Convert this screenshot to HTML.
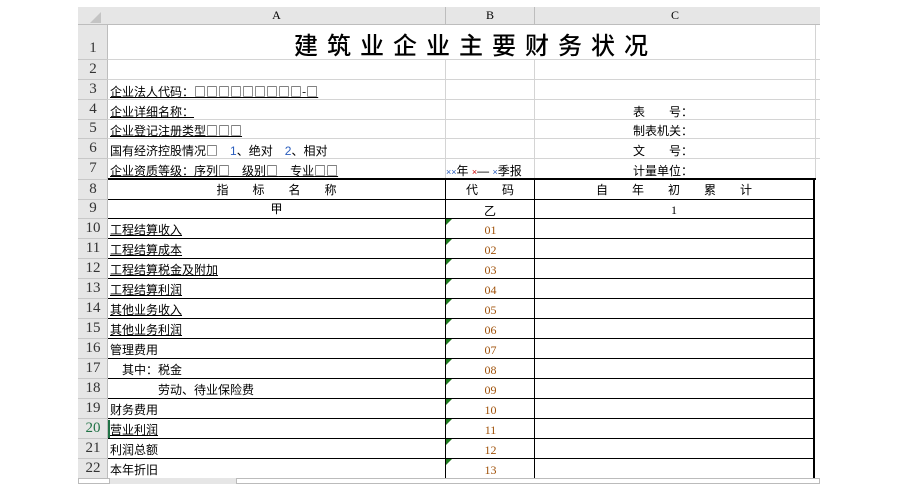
<!DOCTYPE html>
<html><head><meta charset="utf-8"><style>
*{margin:0;padding:0;box-sizing:border-box}
body{width:900px;height:484px;background:#fff;position:relative;overflow:hidden;font-family:"Liberation Sans","Noto Sans CJK SC",sans-serif;font-size:12px;color:#000}
.a{position:absolute;white-space:nowrap}
.hl{position:absolute;height:1px;background:#d4d4d4}
.vl{position:absolute;width:1px;background:#d4d4d4}
.bl{position:absolute;background:#000}
.rh{position:absolute;left:78px;width:30px;text-align:center;font-size:15px;color:#333;font-family:"Liberation Serif","Noto Sans CJK SC",serif}
.t{position:absolute;left:110px;font-size:12px;line-height:20px}
.q{font-family:"Noto Sans CJK SC",sans-serif}
.code{position:absolute;left:446px;width:89px;text-align:center;color:#a0520a;font-family:"Liberation Serif",serif;font-size:12px;line-height:20px}
.tri{position:absolute;left:446px;width:0;height:0;border-top:6px solid #1e7b1e;border-right:6px solid transparent}
</style></head><body>
<div class="a" style="left:78px;top:7px;width:742px;height:18px;background:#e6e6e6;border-bottom:1px solid #bdbdbd"></div>
<div class="a" style="left:78px;top:25px;width:30px;height:453px;background:#e6e6e6;border-right:1px solid #bdbdbd"></div>
<div class="a" style="left:90px;top:12px;width:0;height:0;border-bottom:11px solid #c4c4c4;border-left:11px solid transparent"></div>
<div class="vl" style="left:445px;top:7px;height:18px;background:#bdbdbd"></div>
<div class="vl" style="left:534px;top:7px;height:18px;background:#bdbdbd"></div>
<div class="a" style="left:108px;top:8px;width:337px;text-align:center;font-family:'Liberation Serif',serif;font-size:12px">A</div>
<div class="a" style="left:446px;top:8px;width:88px;text-align:center;font-family:'Liberation Serif',serif;font-size:12px">B</div>
<div class="a" style="left:535px;top:8px;width:280px;text-align:center;font-family:'Liberation Serif',serif;font-size:12px">C</div>
<div class="hl" style="left:78px;top:59px;width:742px"></div>
<div class="hl" style="left:78px;top:79px;width:742px"></div>
<div class="hl" style="left:78px;top:99px;width:742px"></div>
<div class="hl" style="left:78px;top:119px;width:742px"></div>
<div class="hl" style="left:78px;top:138px;width:742px"></div>
<div class="hl" style="left:78px;top:158px;width:742px"></div>
<div class="vl" style="left:445px;top:59px;height:120px"></div>
<div class="vl" style="left:534px;top:59px;height:120px"></div>
<div class="vl" style="left:815px;top:25px;height:154px"></div>
<div class="a" style="left:108px;top:28px;width:707px;text-align:center;font-size:24px;letter-spacing:9px;font-family:'Noto Sans CJK SC',sans-serif;line-height:32px;padding-left:28px;font-weight:500">建筑业企业主要财务状况</div>
<div class="t" style="top:82px;text-decoration:underline">企业法人代码：<span class="q">□□□□□□□□□-□</span></div>
<div class="t" style="top:102px;text-decoration:underline">企业详细名称：</div>
<div class="t" style="top:121px;text-decoration:underline">企业登记注册类型<span class="q">□□□</span></div>
<div class="t" style="top:141px">国有经济控股情况<span class="q">□</span>　<span style="color:#2a5dbd">1</span>、绝对　<span style="color:#2a5dbd">2</span>、相对</div>
<div class="t" style="top:161px;text-decoration:underline">企业资质等级：序列<span class="q">□</span>　级别<span class="q">□</span>　专业<span class="q">□□</span></div>
<div class="a" style="left:446px;top:161px;line-height:20px;font-size:12px"><span style="font-size:9px;color:#2a5dbd">××</span>年 <span style="font-size:9px;color:#c00">×</span>— <span style="font-size:9px;color:#2a5dbd">×</span>季报</div>
<div class="a" style="left:633px;top:102px;line-height:20px">表　　号：</div>
<div class="a" style="left:633px;top:121px;line-height:20px">制表机关：</div>
<div class="a" style="left:633px;top:141px;line-height:20px">文　　号：</div>
<div class="a" style="left:633px;top:161px;line-height:20px">计量单位：</div>
<div class="bl" style="left:108px;top:178px;width:708px;height:2px"></div>
<div class="bl" style="left:813px;top:178px;width:2px;height:300px"></div>
<div class="bl" style="left:445px;top:178px;width:1px;height:300px"></div>
<div class="bl" style="left:534px;top:178px;width:1px;height:300px"></div>
<div class="a" style="left:108px;top:181px;width:337px;text-align:center;line-height:19px">指　　标　　名　　称</div>
<div class="a" style="left:446px;top:181px;width:88px;text-align:center;line-height:19px">代　　码</div>
<div class="a" style="left:535px;top:181px;width:278px;text-align:center;line-height:19px">自　　年　　初　　累　　计</div>
<div class="a" style="left:108px;top:200px;width:337px;text-align:center;line-height:19px">甲</div>
<div class="a" style="left:446px;top:201px;width:88px;text-align:center;line-height:20px">乙</div>
<div class="a" style="left:535px;top:200px;width:278px;text-align:center;line-height:20px;font-family:'Liberation Serif',serif">1</div>
<div id="rows"></div>
<div class="a" style="left:78px;top:478px;width:742px;height:6px;background:#e6e6e6"></div>
<div class="a" style="left:78px;top:478px;width:32px;height:6px;background:#fff;border:1px solid #bbb"></div>
<div class="a" style="left:236px;top:478px;width:584px;height:6px;background:#fff;border:1px solid #bbb"></div>
<script>
var h='';
var tops=[25,59,79,99,119,138,158,179,199,218,238,258,278,298,318,338,358,378,398,418,438,458,478];
for(var i=0;i<22;i++){var t=tops[i],b=tops[i+1];
h+='<div class="rh" style="top:'+t+'px;height:'+(b-t)+'px;line-height:'+(i==0?(b-t)*2-22:(b-t))+'px;'+(i==19?'color:#217346;':'')+'">'+(i+1)+'</div>';
h+='<div class="hl" style="left:78px;top:'+b+'px;width:30px;background:#c8c8c8"></div>';}
var names=['工程结算收入','工程结算成本','工程结算税金及附加','工程结算利润','其他业务收入','其他业务利润','管理费用','　其中：税金','　　　　劳动、待业保险费','财务费用','营业利润','利润总额','本年折旧'];
var u=[1,1,1,1,1,1,0,0,0,0,1,0,0];
for(var k=0;k<13;k++){var t=tops[9+k];
h+='<div class="bl" style="left:108px;top:'+t+'px;width:707px;height:1px"></div>';
h+='<div class="t" style="top:'+(t+2)+'px;'+(u[k]?'text-decoration:underline':'')+'">'+names[k]+'</div>';
h+='<div class="code" style="top:'+(t+2)+'px">'+(k<9?'0':'')+(k+1)+'</div>';
h+='<div class="tri" style="top:'+(t+1)+'px"></div>';}
h+='<div class="bl" style="left:108px;top:199px;width:707px;height:1px"></div>';
h+='<div class="a" style="left:108px;top:420px;width:2px;height:18px;background:#217346"></div>';
document.getElementById('rows').innerHTML=h;
</script>
</body></html>
